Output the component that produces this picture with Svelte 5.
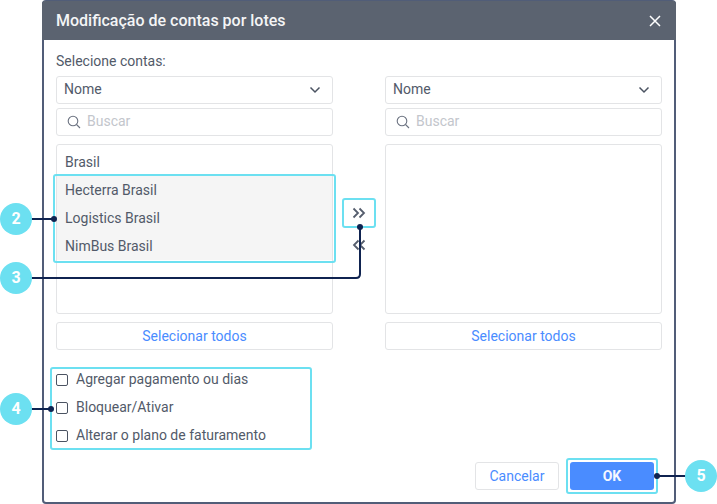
<script>
	const accounts = ['Brasil', 'Hecterra Brasil', 'Logistics Brasil', 'NimBus Brasil'];
	const options = ['Agregar pagamento ou dias', 'Bloquear/Ativar', 'Alterar o plano de faturamento'];
	const badges = [
		{ n: 2, x: 0, y: 203 },
		{ n: 3, x: 0, y: 262 },
		{ n: 4, x: 0, y: 393 },
		{ n: 5, x: 685, y: 460 }
	];
</script>

{#snippet picker(items)}
	<div class="picker">
		<div class="select">
			<span>Nome</span>
			<svg width="12" height="8" viewBox="0 0 12 8"><path d="M1.500 1.500 6 6l4.500-4.500" fill="none" stroke="#4b5362" stroke-width="1.500" /></svg>
		</div>
		<div class="search">
			<svg width="16" height="16" viewBox="0 0 16 16"><circle cx="7" cy="7" r="4.800" fill="none" stroke="#6b7280" stroke-width="1.100" /><path d="m10.500 10.500 3.500 3.500" stroke="#6b7280" stroke-width="1.100" /></svg>
			<span>Buscar</span>
		</div>
		<div class="list">
			{#each items as item, i}
				<div class="row" class:selected={i > 0}>{item}</div>
			{/each}
		</div>
		<button class="all">Selecionar todos</button>
	</div>
{/snippet}

<div class="page">
	<div class="dialog">
		<header>
			<h1>Modificação de contas por lotes</h1>
			<svg width="12" height="12" viewBox="0 0 12 12"><path d="M1 1l10 10M11 1 1 11" stroke="#fff" stroke-width="1.500" /></svg>
		</header>
		<main>
			<p class="label">Selecione contas:</p>
			<div class="columns">
				{@render picker(accounts)}
				<div class="arrows">
					<svg width="16" height="12" viewBox="0 0 16 12"><path d="M2.500 1.500 7 6l-4.500 4.500M8.500 1.500 13 6l-4.500 4.500" fill="none" stroke="#555d6d" stroke-width="1.800" /></svg>
					<svg width="16" height="12" viewBox="0 0 16 12"><path d="M7.500 1.500 3 6l4.500 4.500M13.500 1.500 9 6l4.500 4.500" fill="none" stroke="#555d6d" stroke-width="1.800" /></svg>
				</div>
				{@render picker([])}
			</div>
			<div class="checks">
				{#each options as option}
					<label><span class="box"></span>{option}</label>
				{/each}
			</div>
			<footer>
				<button class="cancel">Cancelar</button>
				<button class="ok">OK</button>
			</footer>
		</main>
	</div>

	<!-- annotations on top of the screenshot -->
	<svg class="marks" width="717" height="504" viewBox="0 0 717 504">
		<g fill="none" stroke="#6ce0f1" stroke-width="2">
			<rect x="54" y="175" width="281" height="87" rx="2" />
			<rect x="343" y="199" width="32" height="28" rx="2" />
			<rect x="51" y="368" width="260" height="81" rx="2" />
			<rect x="567" y="459" width="90" height="34" rx="2" />
		</g>
		<g fill="none" stroke="#0f2350" stroke-width="2">
			<path d="M30 219H54" />
			<path d="M30 278H356q4 0 4-4V227" />
			<path d="M30 409H51" />
			<path d="M657 476H687" />
		</g>
		<g fill="#0f2350">
			<circle cx="54" cy="219" r="3" />
			<circle cx="360" cy="227" r="3" />
			<circle cx="51" cy="409" r="3" />
			<circle cx="657" cy="476" r="3" />
		</g>
	</svg>
	{#each badges as b}
		<div class="badge" style="left: {b.x}px; top: {b.y}px">{b.n}</div>
	{/each}
</div>

<style>
	:global(body) {
		background: #fff;
		overflow: hidden;
	}

	.page {
		position: relative;
		width: 717px;
		height: 504px;
		overflow: hidden;
		font-family: Roboto, sans-serif;
		font-size: 14px;
		color: #525a69;
	}

	.dialog {
		box-sizing: border-box;
		width: 634px;
		height: 503.500px;
		margin-left: 42px;
		border: 2px solid #515d78;
		border-top: 1px solid #515d78;
		border-radius: 4px;
		display: flex;
		flex-direction: column;
		background: #fff;
	}

	header {
		flex: none;
		height: 39px;
		margin: 0 -2px;
		padding: 0 15px 0 14px;
		background: #5b6370;
		border-radius: 3px 3px 0 0;
		display: flex;
		align-items: center;
		justify-content: space-between;
	}

	h1 {
		margin: 0;
		font-size: 16px;
		font-weight: 500;
		color: #f4f5f6;
	}

	main {
		flex: 1;
		padding: 12px 12px 0;
		display: flex;
		flex-direction: column;
		min-height: 0;
	}

	.label {
		margin: 0;
		height: 24px;
		line-height: 18px;
	}

	.columns {
		display: flex;
		gap: 0;
	}

	.picker {
		width: 277px;
		display: flex;
		flex-direction: column;
	}

	.select, .search, .all {
		box-sizing: border-box;
		height: 28px;
		border: 1px solid #e3e4e6;
		border-radius: 3px;
		display: flex;
		align-items: center;
		background: #fff;
	}

	.select {
		justify-content: space-between;
		padding: 0 11px 2px 7px;
	}

	.select svg {
		margin-top: 2px;
	}

	.search {
		margin-top: 4px;
		gap: 5px;
		padding: 0 0 2px 9px;
		color: #c3c6cc;
	}

	.search svg {
		margin-top: 2px;
	}

	.list {
		box-sizing: border-box;
		height: 170px;
		margin-top: 8px;
		padding-top: 3px;
		border: 1px solid #e3e4e6;
		border-radius: 3px;
	}

	.row {
		height: 28px;
		line-height: 28px;
		padding-left: 8px;
	}

	.row.selected {
		background: #f5f5f5;
	}

	button {
		font: inherit;
		cursor: pointer;
	}

	.all {
		margin-top: 8px;
		padding-bottom: 2px;
		justify-content: center;
		color: #4a8cff;
	}

	.arrows {
		width: 52px;
		padding-top: 131px;
		box-sizing: border-box;
		display: flex;
		flex-direction: column;
		align-items: center;
		gap: 20px;
	}

	.checks {
		margin-top: 16px;
		display: flex;
		flex-direction: column;
	}

	.checks label {
		height: 28px;
		display: flex;
		align-items: center;
		gap: 8px;
		padding-bottom: 2px;
		box-sizing: border-box;
	}

	.box {
		box-sizing: border-box;
		width: 12px;
		height: 12px;
		margin-top: 2px;
		border: 1px solid #4b5362;
		border-radius: 2px;
	}

	footer {
		margin-top: 12px;
		padding-right: 8px;
		display: flex;
		justify-content: flex-end;
		gap: 11px;
	}

	footer button {
		box-sizing: border-box;
		width: 84px;
		height: 28px;
		border-radius: 3px;
		padding-bottom: 2px;
	}

	.cancel {
		background: #fff;
		border: 1px solid #e3e4e6;
		color: #4a8cff;
	}

	.ok {
		background: #4a8cff;
		border: none;
		color: #f4f7ff;
		font-weight: 700;
	}

	.marks {
		position: absolute;
		left: 0;
		top: 0;
	}

	.badge {
		position: absolute;
		width: 32px;
		height: 32px;
		border-radius: 50%;
		background: #6ce0f1;
		color: #fff;
		font-weight: 700;
		font-size: 16px;
		line-height: 32px;
		text-align: center;
	}
</style>
